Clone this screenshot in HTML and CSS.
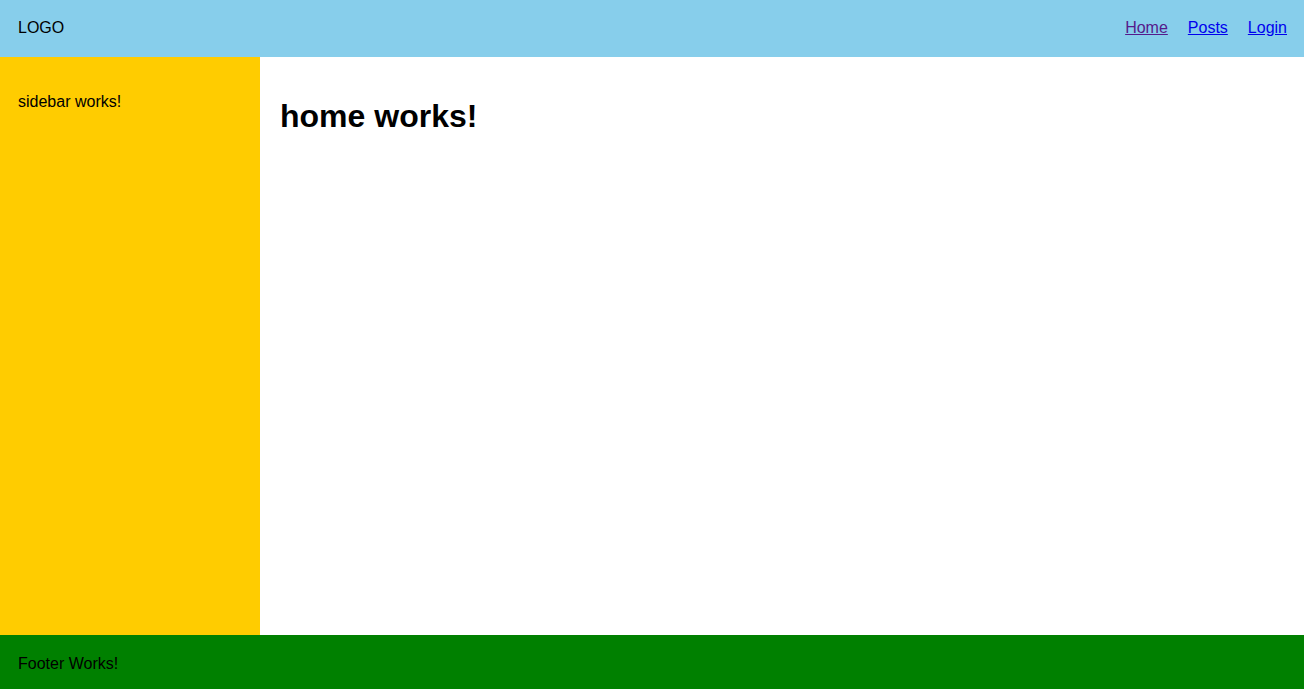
FILE: index.html
```html
<!DOCTYPE html>
<html>
<head>
<meta charset="utf-8">
<link rel="stylesheet" href="styles.css">
</head>
<body>
<div class="app">
  <header class="header">
    <div class="logo">LOGO</div>
    <nav class="nav">
      <a href="#" class="link visited">Home</a>
      <a href="#" class="link">Posts</a>
      <a href="#" class="link">Login</a>
    </nav>
  </header>
  <div class="middle">
    <aside class="sidebar"><p>sidebar works!</p></aside>
    <main class="main"><h1>home works!</h1></main>
  </div>
  <footer class="footer">Footer Works!</footer>
</div>
</body>
</html>
```
FILE: styles.css
```css
html, body {
  margin: 0;
  padding: 0;
  height: 100%;
}
body {
  font-family: "Liberation Sans", Arial, sans-serif;
  font-size: 16px;
  color: #000;
}
.app {
  display: flex;
  flex-direction: column;
  height: 689px;
}
.header {
  height: 57px;
  background: #87ceeb;
  display: flex;
  align-items: center;
  justify-content: space-between;
  padding: 0 17px 2px 18px;
  box-sizing: border-box;
  flex: none;
}
.nav {
  display: flex;
  gap: 20px;
}
.link {
  color: #0000ee;
  text-decoration: underline;
}
.link.visited {
  color: #551a8b;
}
.middle {
  flex: 1;
  display: flex;
  min-height: 0;
}
.sidebar {
  width: 260px;
  flex: none;
  background: #ffcc00;
  padding: 20px 18px;
  box-sizing: border-box;
}
.sidebar p {
  margin: 16px 0;
}
.main {
  flex: 1;
  background: #fff;
  padding: 20px;
}
.main h1 {
  font-size: 32px;
  margin: 21.44px 0;
}
.footer {
  height: 54px;
  flex: none;
  background: #008000;
  display: flex;
  align-items: center;
  padding: 4px 18px 0;
  box-sizing: border-box;
}
```
